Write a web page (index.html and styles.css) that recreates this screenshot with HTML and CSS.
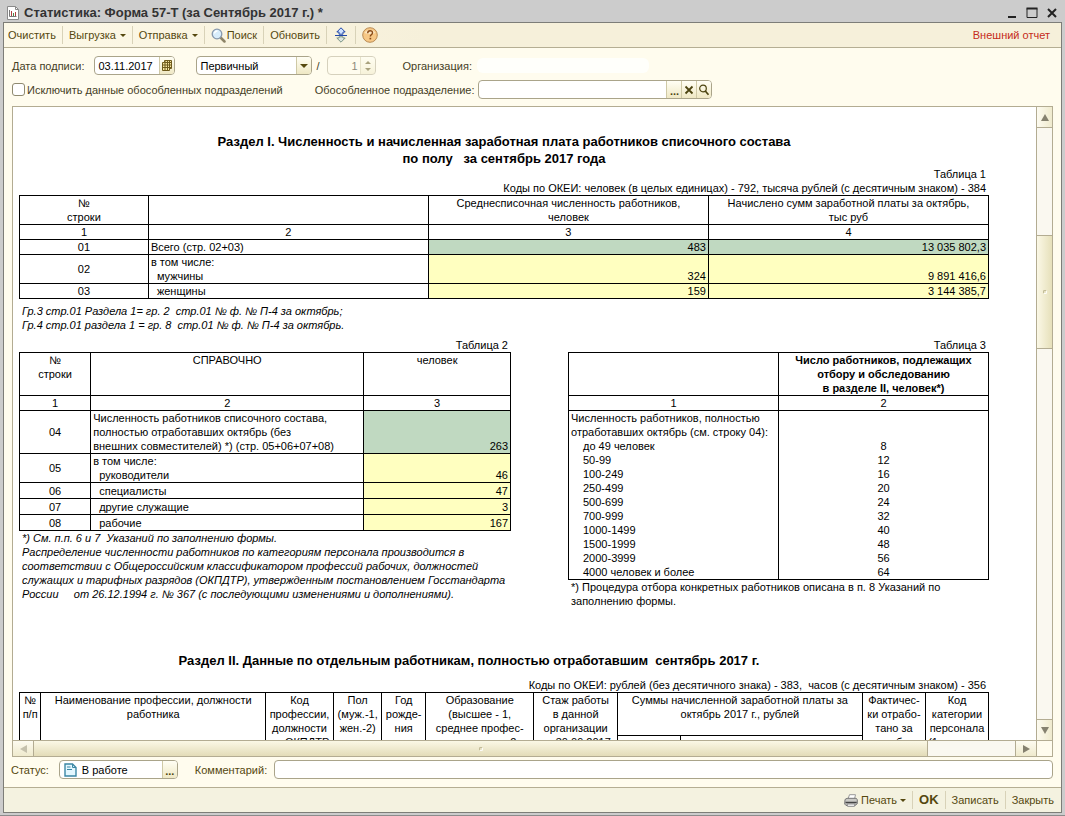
FILE: index.html
```html
<!DOCTYPE html>
<html lang="ru">
<head>
<meta charset="utf-8">
<title>Статистика: Форма 57-Т</title>
<link rel="stylesheet" href="styles.css">
</head>
<body>
<div class="window">
  <header class="titlebar">
    <svg class="title-icon" width="12" height="14" viewBox="0 0 12 14"><path d="M.5.5h8l3 3v10H.5z" fill="#fff" stroke="#8a8a8a"/><path d="M8.500.5v3h3" fill="none" stroke="#8a8a8a"/><path d="M2.500 4v6.500h7" fill="none" stroke="#777"/><path d="M4.500 5v5M8.500 6v4" stroke="#b04040"/><path d="M6.500 7v3" stroke="#4a8a4a"/></svg>
    <h1 class="title">Статистика: Форма 57-Т (за Сентябрь 2017 г.) *</h1>
    <div class="window-buttons">
      <button type="button" aria-label="Свернуть"><svg width="12" height="12" viewBox="0 0 12 12"><path d="M2 10h8" stroke="#222" stroke-width="2"/></svg></button>
      <button type="button" aria-label="Развернуть"><svg width="12" height="12" viewBox="0 0 12 12"><path d="M1 1.500h10v9H1z" fill="none" stroke="#222"/><path d="M.5 1.500h11" stroke="#222" stroke-width="2"/></svg></button>
      <button type="button" aria-label="Закрыть окно"><svg width="12" height="12" viewBox="0 0 12 12"><path d="M2 2l8 8M10 2l-8 8" stroke="#222" stroke-width="2"/></svg></button>
    </div>
  </header>

  <div class="content">
    <nav class="toolbar">
      <button type="button" class="tool">Очистить</button>
      <button type="button" class="tool">Выгрузка<i class="caret"></i></button>
      <button type="button" class="tool">Отправка<i class="caret"></i></button>
      <button type="button" class="tool tool-search"><svg width="15" height="15" viewBox="0 0 15 15"><path d="M9.500 9.500l4 4" stroke="#8d8468" stroke-width="2.500" stroke-linecap="round"/><circle cx="6" cy="6" r="4.800" fill="#d8edfb" stroke="#8798ac" stroke-width="1.300"/><path d="M3.500 5.500a3 3 0 0 1 3-2.500" fill="none" stroke="#fff" stroke-width="1.300"/></svg>Поиск</button>
      <button type="button" class="tool">Обновить</button>
      <button type="button" class="tool tool-icon" aria-label="Свернуть шапку"><svg width="12" height="16" viewBox="0 0 12 16"><path d="M6 .8l4.200 4.200H8v2.200H4V5H1.800z" fill="#cfe2ff" stroke="#2348a8"/><path d="M0 8.500h12" stroke="#2348a8"/><path d="M6 15.200L1.800 11H4V9.800h4V11h2.200z" fill="#dde5df" stroke="#7c9486"/></svg></button>
      <button type="button" class="tool tool-help" aria-label="Справка"><svg width="16" height="16" viewBox="0 0 16 16"><circle cx="8" cy="8" r="7.300" fill="#f7c886" stroke="#b98b55"/><path d="M2.500 6a6 5 0 0 1 11 0q-5.500 2-11 0" fill="#fce5c0"/><path d="M5.700 6.200q0-2.400 2.400-2.400t2.400 2q0 1.300-1.300 2-.9.500-.9 1.700" fill="none" stroke="#8a4b18" stroke-width="1.400"/><path d="M7.500 10.800h1.700v1.600H7.500z" fill="#8a4b18"/></svg></button>
      <a class="external" href="#report">Внешний отчет</a>
    </nav>

    <form class="filters">
      <div class="filter-row">
        <label for="sign-date">Дата подписи:</label>
        <div class="field date-field">
          <input id="sign-date" type="text" value="03.11.2017">
          <button type="button" aria-label="Календарь"><svg width="10" height="11" viewBox="0 0 10 11"><path d="M2.500.5h7v8h-2v2h-7v-8h2z" fill="#f5e5a0" stroke="#6e5a1c"/><path d="M.5 5h9M.5 7.500h9M3 1v9.500M5.500 1v9.500M7.500 1v9M2.500 2.500h7" stroke="#6e5a1c"/></svg></button>
        </div>
        <div class="field kind-field">
          <select aria-label="Вид отчета"><option>Первичный</option></select>
          <span class="drop"><i class="caret caret-big"></i></span>
        </div>
        <span class="slash">/</span>
        <div class="field number-field">
          <input type="text" value="1" aria-label="Номер корректировки" disabled>
          <span class="spin"><i class="caret caret-up"></i><i class="caret"></i></span>
        </div>
        <span class="org-label">Организация:</span>
        <span class="org-value"></span>
      </div>
      <div class="filter-row">
        <input class="check" id="exclude" type="checkbox">
        <label for="exclude">Исключить данные обособленных подразделений</label>
        <label class="unit-label" for="unit">Обособленное подразделение:</label>
        <div class="field unit-field">
          <input id="unit" type="text">
          <button type="button" class="dots" aria-label="Выбрать">...</button>
          <button type="button" aria-label="Очистить поле"><svg width="10" height="10" viewBox="0 0 10 10"><path d="M1.500 1.500l7 7M8.500 1.500l-7 7" stroke="#4c4410" stroke-width="1.800"/></svg></button>
          <button type="button" aria-label="Открыть"><svg width="12" height="12" viewBox="0 0 12 12"><circle cx="5" cy="4.500" r="3.300" fill="none" stroke="#4c4410" stroke-width="1.200"/><path d="M7.300 7l3.200 3.700" stroke="#4c4410" stroke-width="1.700"/></svg></button>
        </div>
      </div>
    </form>

    <main class="viewer" id="report">
      <div class="sheet">
        <h2 class="section-title">Раздел I. Численность и начисленная заработная плата работников списочного состава<br>по полу&nbsp;&nbsp; за сентябрь 2017 года</h2>
        <p class="right">Таблица 1<br>Коды по ОКЕИ: человек (в целых единицах) - 792, тысяча рублей (с десятичным знаком) - 384</p>
        <table class="grid">
          <colgroup><col class="t1-a"><col class="t1-b"><col class="t1-b"><col class="t1-b"></colgroup>
          <tr><th>№<br>строки</th><th></th><th>Среднесписочная численность работников,<br>человек</th><th>Начислено сумм заработной платы за октябрь,<br>тыс руб</th></tr>
          <tr><th>1</th><th>2</th><th>3</th><th>4</th></tr>
          <tr><td class="num">01</td><td>Всего (стр. 02+03)</td><td class="total">483</td><td class="total">13 035 802,3</td></tr>
          <tr><td class="num">02</td><td>в том числе:<br><span class="sub">мужчины</span></td><td class="entry">324</td><td class="entry">9 891 416,6</td></tr>
          <tr><td class="num">03</td><td><span class="sub">женщины</span></td><td class="entry">159</td><td class="entry">3 144 385,7</td></tr>
        </table>
        <p class="note note-top">Гр.3 стр.01 Раздела 1= гр. 2&nbsp; стр.01 № ф. № П-4 за октябрь;<br>Гр.4 стр.01 раздела 1 = гр. 8&nbsp; стр.01 № ф. № П-4 за октябрь.</p>

        <div class="pair">
          <section class="pair-left">
            <p class="right">Таблица 2</p>
            <table class="grid">
              <colgroup><col class="t2-a"><col class="t2-b"><col class="t2-c"></colgroup>
              <tr class="head3"><th>№<br>строки</th><th>СПРАВОЧНО</th><th>человек</th></tr>
              <tr><th>1</th><th>2</th><th>3</th></tr>
              <tr><td class="num">04</td><td>Численность работников списочного состава,<br>полностью отработавших октябрь (без<br>внешних совместителей) *) (стр. 05+06+07+08)</td><td class="total">263</td></tr>
              <tr><td class="num">05</td><td>в том числе:<br><span class="sub">руководители</span></td><td class="entry">46</td></tr>
              <tr class="tall"><td class="num">06</td><td><span class="sub">специалисты</span></td><td class="entry">47</td></tr>
              <tr class="tall"><td class="num">07</td><td><span class="sub">другие служащие</span></td><td class="entry">3</td></tr>
              <tr class="tall"><td class="num">08</td><td><span class="sub">рабочие</span></td><td class="entry">167</td></tr>
            </table>
            <p class="note">*) См. п.п. 6 и 7&nbsp; Указаний по заполнению формы.<br>Распределение численности работников по категориям персонала производится в<br>соответствии с Общероссийским классификатором профессий рабочих, должностей<br>служащих и тарифных разрядов (ОКПДТР), утвержденным постановлением Госстандарта<br>России&nbsp;&nbsp;&nbsp;&nbsp; от 26.12.1994 г. № 367 (с последующими изменениями и дополнениями).</p>
          </section>
          <section class="pair-right">
            <p class="right">Таблица 3</p>
            <table class="grid">
              <colgroup><col class="half"><col class="half"></colgroup>
              <tr><th></th><th class="strong">Число работников, подлежащих<br>отбору и обследованию<br>в разделе II, человек*)</th></tr>
              <tr><th>1</th><th>2</th></tr>
              <tr class="sizes"><td>Численность работников, полностью<br>отработавших октябрь (см. строку 04):
                <span class="indent">до 49 человек<br>50-99<br>100-249<br>250-499<br>500-699<br>700-999<br>1000-1499<br>1500-1999<br>2000-3999<br>4000 человек и более</span></td>
                <td class="quota">8<br>12<br>16<br>20<br>24<br>32<br>40<br>48<br>56<br>64</td></tr>
            </table>
            <p class="note plain">*) Процедура отбора конкретных работников описана в п. 8 Указаний по<br>заполнению формы.</p>
          </section>
        </div>

        <h2 class="section-title second">Раздел II. Данные по отдельным работникам, полностью отработавшим&nbsp; сентябрь 2017 г.</h2>
        <p class="right">Коды по ОКЕИ: рублей (без десятичного знака) - 383,&nbsp; часов (с десятичным знаком) - 356</p>
        <table class="grid staff">
          <colgroup><col class="s-num"><col class="s-name"><col class="s-code"><col class="s-sex"><col class="s-year"><col class="s-edu"><col class="s-exp"><col class="s-cat"><col class="s-sum"><col class="s-cat"><col class="s-cat"></colgroup>
          <tr class="head3"><th rowspan="2">№<br>п/п</th><th rowspan="2">Наименование профессии, должности<br>работника</th><th rowspan="2">Код<br>профессии,<br>должности<br>по ОКПДТР</th><th rowspan="2">Пол<br>(муж.-1,<br>жен.-2)</th><th rowspan="2">Год<br>рожде-<br>ния</th><th rowspan="2">Образование<br>(высшее - 1,<br>среднее профес-<br>сиональное - 2,</th><th rowspan="2">Стаж работы<br>в данной<br>организации<br>на 30.09.2017</th><th colspan="2">Суммы начисленной заработной платы за<br>октябрь 2017 г., рублей</th><th rowspan="2">Фактичес-<br>ки отрабо-<br>тано за<br>октябрь</th><th rowspan="2">Код<br>категории<br>персонала<br>(1 - руково-</th></tr>
          <tr class="head3"><th></th><th></th></tr>
        </table>
      </div>
      <div class="vscroll">
        <span class="scroll-btn"><i class="arrow up"></i></span>
        <span class="v-before"></span>
        <span class="v-thumb"><i class="grip"></i></span>
        <span class="v-after"></span>
        <span class="scroll-btn"><i class="arrow down"></i></span>
      </div>
      <div class="hscroll">
        <span class="scroll-btn"><i class="arrow left"></i></span>
        <span class="h-thumb"><i class="grip"></i></span>
        <span class="h-after"></span>
        <span class="scroll-btn"><i class="arrow rightward"></i></span>
      </div>
      <div class="corner"></div>
    </main>

    <div class="status-row">
      <label for="status">Статус:</label>
      <div class="field status-field">
        <svg width="13" height="14" viewBox="0 0 13 14"><path d="M1 1h7.500L12 4.500V13H1z" fill="#e3f7ff" stroke="#3b87a5" stroke-width="1.400"/><path d="M8.500 1v3.500H12M3 4h3.500M3 6.500h5" fill="none" stroke="#3b87a5"/></svg>
        <input id="status" type="text" value="В работе">
        <button type="button" class="dots" aria-label="Выбрать статус">...</button>
      </div>
      <label class="comment-label" for="comment">Комментарий:</label>
      <div class="field comment-field"><input id="comment" type="text"></div>
    </div>

    <footer class="footer">
      <button type="button" class="tool tool-print"><svg width="14" height="13" viewBox="0 0 14 13"><path d="M4 5L5.500.7h6L10.500 5z" fill="#fff" stroke="#999"/><path d="M1 5.500L3 4.300h9l1.300 1.200v4.200L11 11.500H2L.7 10z" fill="#c9c9c5" stroke="#777"/><path d="M1.500 8.500h11.200" stroke="#444" stroke-width="1.500"/><path d="M3 10h8l-.5 2.300h-7z" fill="#fff" stroke="#888"/></svg>Печать<i class="caret"></i></button>
      <button type="button" class="tool tool-ok">OK</button>
      <button type="button" class="tool">Записать</button>
      <button type="button" class="tool">Закрыть</button>
    </footer>
  </div>
</div>
</body>
</html>
```
FILE: styles.css
```css
* { box-sizing: border-box; }

body {
  margin: 0;
  font: 11px/14px "Liberation Sans", Arial, sans-serif;
  color: #000;
}

h1, h2, p { margin: 0; }
svg { display: block; flex: none; }

button, input, select {
  font: inherit;
  color: inherit;
  margin: 0;
  padding: 0;
  border: 0;
  border-radius: 0;
  background: none;
}

.window {
  height: 100vh;
  display: flex;
  flex-direction: column;
  padding: 1px 3px 2px;
  background: #cccccc;
  border-bottom: 1px solid #8c8c8c;
}

.titlebar {
  height: 21px;
  flex: none;
  display: flex;
  align-items: center;
  padding: 2px 4px 0;
  gap: 5px;
}

.title {
  flex: 1;
  font: bold 13px/16px "Liberation Sans", Arial, sans-serif;
  color: #333;
}

.window-buttons { display: flex; gap: 8px; }

.content {
  flex: 1;
  min-height: 0;
  display: flex;
  flex-direction: column;
  border: 1px solid #7d7d78;
  background: #fffcee;
}

.toolbar, .footer {
  flex: none;
  height: 25px;
  display: flex;
  align-items: center;
  background: #f4f2e0;
  color: #55480f;
}

.toolbar { border-bottom: 1px solid #b5ae93; background: linear-gradient(to right, #fdf9e8, #f6f0da 40%); }

.tool {
  height: 18px;
  display: flex;
  align-items: center;
  gap: 4px;
  padding: 0 6px;
  border-right: 1px solid #d8d2b8;
  white-space: nowrap;
}

.toolbar .tool:first-child { padding-left: 4px; }
.tool-search { gap: 1px; }
.tool-icon { padding: 0 8px; }
.tool-help, .footer .tool:last-child { border-right: 0; }

.caret {
  flex: none;
  border: 3px solid transparent;
  border-top-color: #55480f;
  border-bottom: 0;
}
.caret-big { border-width: 4px 4px 0; }
.caret-up { border-top: 0; border-bottom: 3px solid #55480f; }

.external {
  margin-left: auto;
  padding-right: 11px;
  color: #c52a20;
  text-decoration: none;
}

.filters {
  flex: none;
  display: flex;
  flex-direction: column;
  gap: 5px;
  padding: 8px 9px 7px 8px;
  color: #45401f;
}

.filter-row { display: flex; align-items: center; height: 19px; white-space: nowrap; }

.field {
  height: 19px;
  display: flex;
  align-items: stretch;
  border: 1px solid #aaa48a;
  border-radius: 4px;
  background: #fff;
  color: #000;
  overflow: hidden;
}

.field input, .field select { flex: 1; min-width: 0; padding-left: 3px; appearance: none; outline: none; }

.field button, .drop, .spin {
  flex: none;
  width: 15px;
  display: flex;
  align-items: center;
  justify-content: center;
  border-left: 1px solid #cfc9a6;
  background: linear-gradient(#fffef4, #efe8c4);
}

.field .dots { align-items: flex-end; font-weight: bold; color: #4c4410; }

.date-field { width: 81px; margin-left: 10px; }
.kind-field { width: 116px; margin-left: 21px; }
.slash { margin: 0 7px 0 4px; }
.number-field { width: 49px; border-color: #d6d1bd; background: #fffcee; color: #8d8a7a; }
.number-field input { text-align: right; padding-right: 2px; }
.spin { flex-direction: column; gap: 4px; opacity: .5; }
.org-label { margin-left: 27px; }
.org-value { width: 172px; height: 15px; margin-left: 5px; border-radius: 6px; background: #fffffb; }

.check {
  appearance: none;
  width: 13px;
  height: 13px;
  margin-right: 2px;
  border: 1px solid #8f8a70;
  border-radius: 3px;
  background: #fff;
}
.unit-label { margin-left: 32px; }
.unit-field { width: 234px; margin-left: 4px; }

.viewer {
  flex: 1;
  min-height: 0;
  display: grid;
  grid-template-columns: minmax(0, 1fr) 16px;
  grid-template-rows: minmax(0, 1fr) 16px;
  margin: 0 8px;
  border: 1px solid #b3ac92;
  background: #fff;
}

.sheet { overflow: hidden; padding: 26px 47px 0 6px; }

.section-title {
  font: bold 13px/17px "Liberation Sans", Arial, sans-serif;
  text-align: center;
}
.second { margin: 44px 0 9px; padding-right: 70px; }

.right { padding-right: 3px; text-align: right; }

.grid { width: 100%; table-layout: fixed; border-collapse: collapse; }
.grid th, .grid td {
  padding: 0 2px;
  border: 1px solid #000;
  font-weight: normal;
  text-align: left;
  vertical-align: top;
}
.grid th { text-align: center; padding: 0; white-space: nowrap; }
.grid .strong { font-weight: bold; }
.grid .num { text-align: center; vertical-align: middle; }
.grid .total, .grid .entry { text-align: right; vertical-align: bottom; }
.total { background: #c0d9c1; }
.entry { background: #ffffc0; }
.sub { padding-left: 6px; }
.head3 { height: 43px; }
.tall { height: 16px; }
.grid .tall td { vertical-align: bottom; }
.indent { display: block; padding-left: 12px; }
.grid .quota { text-align: center; vertical-align: bottom; }

.t1-a { width: 13.3%; }
.t1-b { width: 28.9%; }
.t2-a { width: 14.5%; }
.t2-b { width: 55.6%; }
.t2-c { width: 29.9%; }
.half { width: 50%; }
.s-num { width: 2.2%; }
.s-name { width: 23.2%; }
.s-code { width: 7%; }
.s-sex { width: 5%; }
.s-year { width: 4.5%; }
.s-edu { width: 11.2%; }
.s-exp { width: 8.6%; }
.s-cat { width: 6.5%; }
.s-sum { width: 18.8%; }

.note { padding-left: 3px; font-style: italic; white-space: nowrap; }
.note-top { padding-top: 5px; }
.plain { font-style: normal; }

.pair {
  display: grid;
  grid-template-columns: 492fr 421fr;
  gap: 57px;
  padding-top: 6px;
}
.pair section { min-width: 0; }

.vscroll { display: flex; flex-direction: column; border-left: 1px solid #b3ac92; background: #faf8f0; }
.hscroll { display: flex; border-top: 1px solid #b3ac92; background: #faf8f0; }
.corner { border-top: 1px solid #b3ac92; border-left: 1px solid #b3ac92; background: #fffcee; }

.scroll-btn {
  flex: none;
  display: flex;
  align-items: center;
  justify-content: center;
  background: linear-gradient(to right, #fdfbf0, #efeacd);
}
.vscroll .scroll-btn { height: 21px; }
.hscroll .scroll-btn { width: 21px; background: linear-gradient(#fdfbf0, #efeacd); }
.vscroll .scroll-btn:first-child { border-bottom: 1px solid #b3ac92; }
.vscroll .scroll-btn:last-child { border-top: 1px solid #b3ac92; }
.hscroll .scroll-btn:first-child { border-right: 1px solid #b3ac92; }
.hscroll .scroll-btn:last-child { border-left: 1px solid #b3ac92; }

.v-before { flex: 108; }
.v-thumb {
  flex: 112;
  display: flex;
  align-items: center;
  justify-content: center;
  border: solid #b3ac92;
  border-width: 1px 0;
  background: linear-gradient(to right, #fbf8e6, #e6e0ba);
}
.v-after { flex: 372; }
.h-thumb {
  flex: 895;
  display: flex;
  align-items: center;
  justify-content: center;
  border-right: 1px solid #b3ac92;
  background: linear-gradient(#fbf8e6, #e3dcb8);
}
.h-after { flex: 87; }
.grip { width: 4px; height: 4px; border: 1px solid #bbb48e; border-right-color: #fff; border-bottom-color: #fff; border-radius: 2px; }

.arrow { border: 4px solid transparent; }
.up { border-top: 0; border-bottom: 7px solid #85816f; }
.down { border-bottom: 0; border-top: 7px solid #85816f; }
.left { border-left: 0; border-right: 7px solid #c5c1ac; }
.rightward { border-right: 0; border-left: 7px solid #85816f; }

.status-row {
  flex: none;
  display: flex;
  align-items: center;
  padding: 3px 8px 8px 7px;
  color: #55480f;
}
.status-field { width: 119px; margin-left: 10px; padding-left: 4px; }
.status-field svg { align-self: center; }
.status-field input { padding-left: 5px; }
.comment-label { margin-left: 17px; }
.comment-field { flex: 1; margin-left: 7px; }

.footer { border-top: 1px solid #b5ae93; justify-content: flex-end; }
.footer .tool:last-child { padding-right: 7px; }
.tool-print { gap: 3px; }
.footer .tool-ok { font: bold 13px/16px "Liberation Sans", Arial, sans-serif; }
```
